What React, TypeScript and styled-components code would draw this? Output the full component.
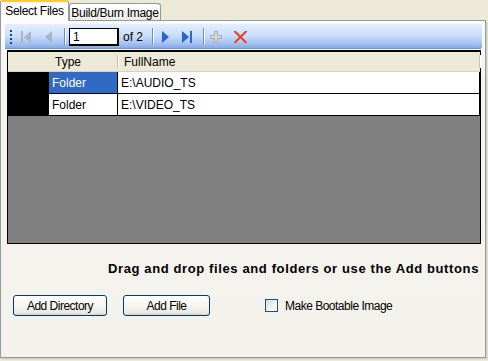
import React from "react";
import styled, { createGlobalStyle } from "styled-components";

const Global = createGlobalStyle`
  html, body { margin: 0; padding: 0; }
  body {
    background: #ECE9D8;
    font-family: "Liberation Sans", Arial, sans-serif;
    width: 488px;
    height: 361px;
    overflow: hidden;
  }
`;

const Root = styled.div`
  width: 488px;
  height: 361px;
  display: flex;
  flex-direction: column;
  background: #ECE9D8;
`;

const TabStrip = styled.div`
  display: flex;
  align-items: flex-end;
  height: 20px;
  padding-left: 0px;
  position: relative;
  z-index: 1;
`;

const Tab = styled.div<{ $active?: boolean }>`
  box-sizing: border-box;
  font-family: "Liberation Sans", Arial, sans-serif;
  font-size: 12px;
  letter-spacing: -0.3px;
  color: #000;
  border: 1px solid #919B9C;
  border-bottom: none;
  border-radius: 3px 3px 0 0;
  display: flex;
  align-items: center;
  justify-content: center;
  ${(p) =>
    p.$active
      ? `
    height: 21px;
    width: 69px;
    margin-bottom: -1px;
    background: #FCFCFE;
    border-top: 2px solid #FFC83C;
    padding-bottom: 2px;
  `
      : `
    height: 17px;
    width: 92px;
    background: linear-gradient(#FFFFFF, #ECEBE6);
    padding-top: 1px;
  `}
`;

const Panel = styled.div`
  box-sizing: border-box;
  width: 486px;
  height: 338px;
  border: 1px solid #919B9C;
  box-shadow: 1px 1px 0 #D0CEBF, 2px 2px 0 #E3E0D0;
  background: linear-gradient(#FCFCFE 0px, #F4F3EE 60px, #F3F2EC 100%);
  display: flex;
  flex-direction: column;
  padding: 3px 0 0 4px;
`;

const Toolbar = styled.div`
  box-sizing: border-box;
  width: 477px;
  height: 25px;
  border-radius: 0 3px 3px 0;
  background: linear-gradient(#E3EFFF 0%, #CADFFB 45%, #A9C6F3 75%, #7FA4E4 100%);
  box-shadow: inset 0 -1px 0 #6F95D8;
  display: flex;
  align-items: center;
  padding-left: 4px;
`;

const Grip = styled.div`
  width: 4px;
  height: 16px;
  margin-right: 1px;
  background-image: radial-gradient(circle, #27416F 0.9px, transparent 1.1px);
  background-size: 4px 4px;
  background-position: 0 0;
`;

const ToolButton = styled.div<{ $w: number }>`
  width: ${(p) => p.$w}px;
  height: 22px;
  flex: none;
  display: flex;
  align-items: center;
  justify-content: center;
`;

const Sep = styled.div<{ $ml?: number }>`
  width: 1px;
  height: 17px;
  margin: 0 4px 0 ${(p) => p.$ml ?? 4}px;
  background: #6A8CCB;
  box-shadow: 1px 0 0 #FFFFFF;
  flex: none;
`;

const PageBox = styled.div`
  box-sizing: border-box;
  width: 50px;
  height: 18px;
  background: #fff;
  border: 1px solid #000;
  border-right-width: 2px;
  border-bottom-width: 2px;
  font-family: "Liberation Sans", Arial, sans-serif;
  font-size: 12px;
  padding: 1px 0 0 3px;
  flex: none;
`;

const OfLabel = styled.span`
  font-family: "Liberation Sans", Arial, sans-serif;
  font-size: 12px;
  margin: 0 5px 0 4px;
  flex: none;
`;

const Grid = styled.div`
  box-sizing: border-box;
  width: 474px;
  height: 194px;
  margin: 1px 0 0 2px;
  border: 1px solid #000;
  border-top-width: 2px;
  background: #808080;
  display: flex;
  flex-direction: column;
`;

const Row = styled.div<{ $header?: boolean }>`
  display: flex;
  height: ${(p) => (p.$header ? 20 : 22)}px;
  background: ${(p) => (p.$header ? "#ECE9D8" : "#fff")};
  border-bottom: 1px solid ${(p) => (p.$header ? "#D6D2C2" : "#000")};
  box-sizing: border-box;
  width: 100%;
`;

const RowHead = styled.div<{ $header?: boolean }>`
  width: 41px;
  background: ${(p) => (p.$header ? "#ECE9D8" : "#000")};
  flex: none;
`;

const Cell = styled.div<{ $w?: number; $selected?: boolean }>`
  box-sizing: border-box;
  ${(p) => (p.$w ? `width: ${p.$w}px; flex: none;` : "flex: 1;")}
  display: flex;
  align-items: center;
  padding-left: 3px;
  font-family: "Liberation Sans", Arial, sans-serif;
  font-size: 12px;
  color: ${(p) => (p.$selected ? "#fff" : "#000")};
  background: ${(p) => (p.$selected ? "#316AC5" : "transparent")};
  border-right: 1px solid #000;
`;

const HeaderCell = styled.div<{ $w?: number }>`
  box-sizing: border-box;
  ${(p) => (p.$w ? `width: ${p.$w}px; flex: none;` : "flex: 1;")}
  display: flex;
  align-items: center;
  padding-left: 6px;
  font-family: "Liberation Sans", Arial, sans-serif;
  font-size: 12px;
  color: #000;
  position: relative;
  &::after {
    content: "";
    position: absolute;
    right: 0;
    top: 3px;
    bottom: 3px;
    width: 1px;
    background: #C7C3B1;
    box-shadow: 1px 0 0 #FFFFFF;
  }
`;

const Hint = styled.div`
  font-family: "Liberation Sans", Arial, sans-serif;
  font-weight: bold;
  font-size: 13px;
  letter-spacing: 0.62px;
  text-align: right;
  width: 474px;
  margin: 17px 0 0 0;
  height: 15px;
  line-height: 15px;
`;

const ActionRow = styled.div`
  display: flex;
  align-items: center;
  margin: 19px 0 0 8px;
`;

const Button = styled.button<{ $w: number }>`
  box-sizing: border-box;
  width: ${(p) => p.$w}px;
  height: 21px;
  border: 1px solid #003C74;
  border-radius: 3px;
  background: linear-gradient(#FFFFFF 0%, #F6F5F1 50%, #E9E8E1 90%, #D6D0C5 100%);
  font-family: "Liberation Sans", Arial, sans-serif;
  font-size: 12px;
  letter-spacing: -0.5px;
  color: #000;
  padding: 0;
  margin-right: 16px;
`;

const CheckLabel = styled.label`
  display: flex;
  align-items: center;
  margin-left: 39px;
  font-family: "Liberation Sans", Arial, sans-serif;
  font-size: 12px;
  letter-spacing: -0.5px;
`;

const CheckBox = styled.span`
  box-sizing: border-box;
  width: 13px;
  height: 13px;
  border: 1px solid #1C5180;
  background: linear-gradient(135deg, #DCDBD5, #F6F6F3 70%, #FFFFFF);
  margin-right: 7px;
`;

const FirstIcon = ({ color }: { color: string }) => (
  <svg width="10" height="12" viewBox="0 0 10 12">
    <rect x="0" y="0" width="2" height="12" fill={color} />
    <path d="M10 0 L3 6 L10 12 Z" fill={color} />
  </svg>
);
const PrevIcon = ({ color }: { color: string }) => (
  <svg width="7" height="12" viewBox="0 0 7 12">
    <path d="M7 0 L0 6 L7 12 Z" fill={color} />
  </svg>
);
const NextIcon = ({ color }: { color: string }) => (
  <svg width="7" height="12" viewBox="0 0 7 12">
    <path d="M0 0 L7 6 L0 12 Z" fill={color} />
  </svg>
);
const LastIcon = ({ color }: { color: string }) => (
  <svg width="10" height="12" viewBox="0 0 10 12">
    <path d="M0 0 L7 6 L0 12 Z" fill={color} />
    <rect x="8" y="0" width="2" height="12" fill={color} />
  </svg>
);
const PlusIcon = () => (
  <svg width="12" height="12" viewBox="0 0 12 12">
    <path d="M4.5 0.5 H7.5 V4.5 H11.5 V7.5 H7.5 V11.5 H4.5 V7.5 H0.5 V4.5 H4.5 Z" fill="#D8D8D8" stroke="#A8A8A8" />
  </svg>
);
const DeleteIcon = () => (
  <svg width="13" height="12" viewBox="0 0 13 12">
    <path d="M1 0.5 L12 11.5 M12 0.5 L1 11.5" stroke="#EE3A1E" strokeWidth="2" strokeLinecap="square" />
  </svg>
);

export default function App() {
  return (
    <Root>
      <Global />
      <TabStrip>
        <Tab $active>Select Files</Tab>
        <Tab>Build/Burn Image</Tab>
      </TabStrip>
      <Panel>
        <Toolbar>
          <Grip />
          <ToolButton $w={23}><FirstIcon color="#A9B4C6" /></ToolButton>
          <ToolButton $w={23}><PrevIcon color="#A9B4C6" /></ToolButton>
          <Sep />
          <PageBox>1</PageBox>
          <OfLabel>of 2</OfLabel>
          <Sep />
          <ToolButton $w={17}><NextIcon color="#2B63D4" /></ToolButton>
          <ToolButton $w={26}><LastIcon color="#2B63D4" /></ToolButton>
          <Sep $ml={3} />
          <ToolButton $w={16}><PlusIcon /></ToolButton>
          <ToolButton $w={33}><DeleteIcon /></ToolButton>
        </Toolbar>
        <Grid>
          <Row $header>
            <RowHead $header />
            <HeaderCell $w={69}>Type</HeaderCell>
            <HeaderCell>FullName</HeaderCell>
          </Row>
          <Row>
            <RowHead />
            <Cell $w={69} $selected>Folder</Cell>
            <Cell>E:\AUDIO_TS</Cell>
          </Row>
          <Row>
            <RowHead />
            <Cell $w={69}>Folder</Cell>
            <Cell>E:\VIDEO_TS</Cell>
          </Row>
        </Grid>
        <Hint>Drag and drop files and folders or use the Add buttons</Hint>
        <ActionRow>
          <Button $w={94}>Add Directory</Button>
          <Button $w={87}>Add File</Button>
          <CheckLabel>
            <CheckBox />
            Make Bootable Image
          </CheckLabel>
        </ActionRow>
      </Panel>
    </Root>
  );
}
